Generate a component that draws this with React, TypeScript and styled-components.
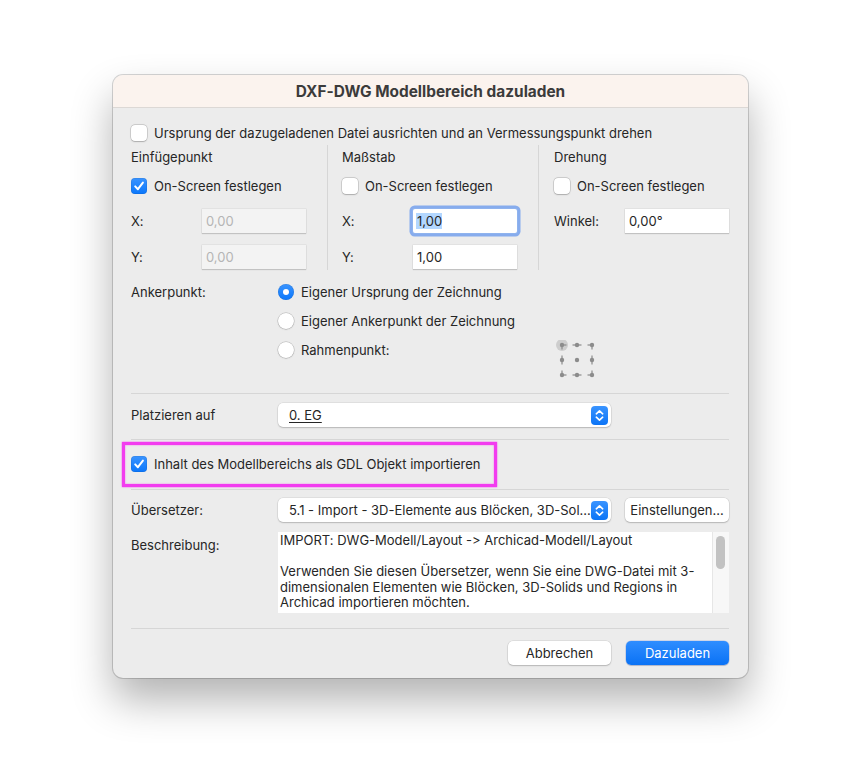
import React from "react";
import styled, { createGlobalStyle } from "styled-components";

const Global = createGlobalStyle`
  html, body { margin: 0; padding: 0; background: #ffffff; }
  body {
    font-family: Inter, "Noto Sans", "Liberation Sans", sans-serif;
    font-size: 13px;
    color: #262626;
    -webkit-font-smoothing: antialiased;
    font-feature-settings: "calt" 0, "liga" 0;
    font-variant-ligatures: none;
  }
  * { box-sizing: border-box; }
`;

const Page = styled.div`
  width: 848px;
  height: 765px;
  padding: 75px 0 0 113px;
`;

const Dialog = styled.div`
  width: 635px;
  border-radius: 10px;
  background: #ececec;
  overflow: hidden;
  box-shadow: 0 0 0 1px rgba(0, 0, 0, 0.16), 0 22px 42px rgba(0, 0, 0, 0.3);
  display: flex;
  flex-direction: column;
`;

const TitleBar = styled.div`
  height: 33px;
  background: #fbf3ee;
  border-bottom: 1px solid #dcd8d5;
  display: flex;
  align-items: center;
  justify-content: center;
  font-weight: 700;
  font-size: 15.4px;
  color: #3b3b3b;
`;

const Body = styled.div`
  padding: 17px 19px 13px 18px;
  display: flex;
  flex-direction: column;
`;

const CheckRow = styled.label<{ $mt?: number }>`
  display: flex;
  align-items: center;
  gap: 7px;
  height: 16px;
  line-height: 16px;
  margin-top: ${(p) => p.$mt ?? 0}px;
  white-space: nowrap;
`;

const Box = styled.span<{ $checked?: boolean }>`
  width: 16px;
  height: 16px;
  flex: none;
  border-radius: 4px;
  display: inline-flex;
  align-items: center;
  justify-content: center;
  background: ${(p) => (p.$checked ? "linear-gradient(#3a94ff, #0b77fb)" : "#ffffff")};
  box-shadow: ${(p) =>
    p.$checked
      ? "inset 0 0 0 0.5px rgba(0,0,0,0.12)"
      : "0 0 0 0.5px rgba(0,0,0,0.22), 0 0.5px 1.5px rgba(0,0,0,0.18)"};
`;

const RadioDot = styled.span<{ $checked?: boolean }>`
  width: 16px;
  height: 16px;
  flex: none;
  border-radius: 50%;
  display: inline-flex;
  align-items: center;
  justify-content: center;
  background: ${(p) => (p.$checked ? "linear-gradient(#3a94ff, #0b77fb)" : "#ffffff")};
  box-shadow: ${(p) =>
    p.$checked
      ? "inset 0 0 0 0.5px rgba(0,0,0,0.12)"
      : "0 0 0 0.5px rgba(0,0,0,0.22), 0 0.5px 1.5px rgba(0,0,0,0.18)"};
  &::after {
    content: "";
    display: ${(p) => (p.$checked ? "block" : "none")};
    width: 6px;
    height: 6px;
    border-radius: 50%;
    background: #fff;
  }
`;

const Check = ({ checked }: { checked?: boolean }) => (
  <Box $checked={checked}>
    {checked && (
      <svg width="16" height="16" viewBox="0 0 16 16">
        <path d="M4.2 8.4 L6.9 11.2 L11.9 4.6" fill="none" stroke="#fff" strokeWidth="2" strokeLinecap="round" strokeLinejoin="round" />
      </svg>
    )}
  </Box>
);

const Columns = styled.div`
  display: flex;
  margin-top: 4px;
`;

const Column = styled.div<{ $w: number; $pl: number; $sep?: boolean }>`
  width: ${(p) => p.$w}px;
  padding: 4px 0 1px ${(p) => p.$pl}px;
  border-left: ${(p) => (p.$sep ? "1px solid #d6d6d6" : "none")};
  display: flex;
  flex-direction: column;
`;

const Heading = styled.div`
  line-height: 16px;
  height: 16px;
`;

const FieldRow = styled.div<{ $mt: number }>`
  display: flex;
  align-items: center;
  margin-top: ${(p) => p.$mt}px;
`;

const FieldLabel = styled.span`
  width: 71px;
  flex: none;
`;

const Input = styled.div<{ $w: number; $disabled?: boolean; $focus?: boolean }>`
  width: ${(p) => p.$w}px;
  height: 24px;
  padding: 0 4px;
  display: flex;
  align-items: center;
  background: ${(p) => (p.$disabled ? "#f3f3f3" : "#ffffff")};
  color: ${(p) => (p.$disabled ? "#b5b5b5" : "#262626")};
  box-shadow: ${(p) =>
    p.$focus
      ? "0 0 0 1px #8fb3ee, 0 0 0 3.5px rgba(52, 120, 238, 0.55)"
      : "0 0 0 0.5px rgba(0,0,0,0.08), 0 1px 1px rgba(0,0,0,0.14)"};
  border-radius: ${(p) => (p.$focus ? "2px" : "0")};
`;

const Selected = styled.span`
  background: #b3d7ff;
  margin-left: -1px;
  padding-left: 1px;
`;

const AnchorGrid = styled.div`
  display: grid;
  grid-template-columns: 147px 278px auto;
  grid-template-rows: 16px 16px 16px;
  row-gap: 13px;
  margin-top: 14px;
  align-items: center;
`;

const RadioRow = styled.div`
  display: flex;
  align-items: center;
  gap: 7px;
  grid-column: 2;
  line-height: 16px;
`;

const AnchorWidget = styled.div`
  grid-column: 3;
  grid-row: 3;
  align-self: start;
  margin-top: -2px;
  width: 42px;
  height: 38px;
`;

const Separator = styled.div<{ $mt: number }>`
  height: 1px;
  background: #d6d6d6;
  margin-top: ${(p) => p.$mt}px;
`;

const FormRow = styled.div<{ $mt: number; $align?: string }>`
  display: flex;
  align-items: ${(p) => p.$align ?? "center"};
  margin-top: ${(p) => p.$mt}px;
`;

const RowLabel = styled.span<{ $pt?: number }>`
  width: 147px;
  flex: none;
  line-height: 16px;
  padding-top: ${(p) => p.$pt ?? 0}px;
`;

const Select = styled.div`
  width: 333px;
  height: 24px;
  border-radius: 5px;
  background: #ffffff;
  box-shadow: 0 0 0 0.5px rgba(0,0,0,0.1), 0 1px 1.5px rgba(0,0,0,0.18);
  display: flex;
  align-items: center;
  padding: 0 3px 0 11px;
  white-space: nowrap;
`;

const SelectText = styled.span<{ $underline?: boolean }>`
  flex: 1;
  overflow: hidden;
  text-decoration: ${(p) => (p.$underline ? "underline" : "none")};
  text-underline-offset: 2px;
`;

const Stepper = styled.span`
  width: 17px;
  height: 19px;
  flex: none;
  border-radius: 4px;
  background: linear-gradient(#3a94ff, #0b74f6);
  display: inline-flex;
  align-items: center;
  justify-content: center;
`;

const Arrows = () => (
  <Stepper>
    <svg width="17" height="19" viewBox="0 0 17 19">
      <path d="M5.3 7.8 L8.5 4.8 L11.7 7.8" fill="none" stroke="#fff" strokeWidth="1.6" strokeLinecap="round" strokeLinejoin="round" />
      <path d="M5.3 11.2 L8.5 14.2 L11.7 11.2" fill="none" stroke="#fff" strokeWidth="1.6" strokeLinecap="round" strokeLinejoin="round" />
    </svg>
  </Stepper>
);

const Highlight = styled.div`
  margin-top: 2px;
  margin-left: -9px;
  width: 375px;
  height: 45px;
  border: 3px solid #f23cef;
  box-shadow: 0 0 1.5px #f23cef, inset 0 0 1.5px #f23cef;
  display: flex;
  align-items: center;
  padding-left: 6px;
  padding-bottom: 2px;
`;

const Button = styled.div<{ $primary?: boolean; $w: number; $ml?: number }>`
  width: ${(p) => p.$w}px;
  height: 24px;
  margin-left: ${(p) => p.$ml ?? 0}px;
  border-radius: 5px;
  display: flex;
  align-items: center;
  justify-content: center;
  white-space: nowrap;
  background: ${(p) => (p.$primary ? "linear-gradient(#2f8dff, #0a72f5)" : "#ffffff")};
  color: ${(p) => (p.$primary ? "#ffffff" : "#262626")};
  box-shadow: ${(p) =>
    p.$primary
      ? "0 0 0 0.5px rgba(0,60,200,0.25), 0 1px 1px rgba(0,0,0,0.15)"
      : "0 0 0 0.5px rgba(0,0,0,0.12), 0 1px 1.5px rgba(0,0,0,0.18)"};
`;

const TextArea = styled.div`
  width: 451px;
  height: 81px;
  background: #ffffff;
  display: flex;
`;

const TextContent = styled.div`
  flex: 1;
  padding: 1px 2px;
  line-height: 15.5px;
  white-space: nowrap;
`;

const ScrollTrack = styled.div`
  width: 17px;
  flex: none;
  background: #f7f7f7;
  border-left: 1px solid #e6e6e6;
  padding: 4px 0 0 3px;
`;

const ScrollThumb = styled.div`
  width: 9px;
  height: 33px;
  border-radius: 5px;
  background: #c2c2c2;
`;

const ButtonBar = styled.div`
  display: flex;
  justify-content: flex-end;
  gap: 15px;
  margin-top: 12px;
`;

const Spacer = styled.div`
  height: 16px;
`;

const Widget = () => {
  const c = "#8c8c8c";
  const xs = [6, 21, 36];
  const ys = [5, 20, 35];
  const arms: Record<string, [number, number][]> = {
    "0-0": [[1, 0], [0, 1]],
    "1-0": [[-1, 0], [1, 0]],
    "2-0": [[-1, 0], [0, 1]],
    "0-1": [[0, -1], [0, 1]],
    "1-1": [],
    "2-1": [[0, -1], [0, 1]],
    "0-2": [[1, 0], [0, -1]],
    "1-2": [[-1, 0], [1, 0]],
    "2-2": [[-1, 0], [0, -1]],
  };
  return (
    <AnchorWidget>
      <svg width="42" height="38" viewBox="0 0 42 38">
        <circle cx={xs[0]} cy={ys[0]} r="6" fill="rgba(0,0,0,0.13)" />
        {xs.map((x, i) =>
          ys.map((y, j) => (
            <g key={`${i}-${j}`}>
              {arms[`${i}-${j}`].map(([dx, dy], k) => (
                <line key={k} x1={x} y1={y} x2={x + dx * 4.5} y2={y + dy * 4.5} stroke={c} strokeWidth="1.2" />
              ))}
              <circle cx={x} cy={y} r="2.2" fill={c} />
            </g>
          ))
        )}
      </svg>
    </AnchorWidget>
  );
};

export default function App() {
  return (
    <Page>
      <Global />
      <Dialog>
        <TitleBar>DXF-DWG Modellbereich dazuladen</TitleBar>
        <Body>
          <CheckRow>
            <Check />
            Ursprung der dazugeladenen Datei ausrichten und an Vermessungspunkt drehen
          </CheckRow>

          <Columns>
            <Column $w={196} $pl={0}>
              <Heading>Einfügepunkt</Heading>
              <CheckRow $mt={13}>
                <Check checked />
                On-Screen festlegen
              </CheckRow>
              <FieldRow $mt={15}>
                <FieldLabel>X:</FieldLabel>
                <Input $w={104} $disabled>0,00</Input>
              </FieldRow>
              <FieldRow $mt={12}>
                <FieldLabel>Y:</FieldLabel>
                <Input $w={104} $disabled>0,00</Input>
              </FieldRow>
            </Column>
            <Column $w={211} $pl={14} $sep>
              <Heading>Maßstab</Heading>
              <CheckRow $mt={13}>
                <Check />
                On-Screen festlegen
              </CheckRow>
              <FieldRow $mt={15}>
                <FieldLabel>X:</FieldLabel>
                <Input $w={104} $focus>
                  <Selected>1,00</Selected>
                </Input>
              </FieldRow>
              <FieldRow $mt={12}>
                <FieldLabel>Y:</FieldLabel>
                <Input $w={104}>1,00</Input>
              </FieldRow>
            </Column>
            <Column $w={191} $pl={15} $sep>
              <Heading>Drehung</Heading>
              <CheckRow $mt={13}>
                <Check />
                On-Screen festlegen
              </CheckRow>
              <FieldRow $mt={15}>
                <FieldLabel>Winkel:</FieldLabel>
                <Input $w={104}>0,00°</Input>
              </FieldRow>
              <FieldRow $mt={12}>
                <Spacer />
              </FieldRow>
            </Column>
          </Columns>

          <AnchorGrid>
            <span>Ankerpunkt:</span>
            <RadioRow>
              <RadioDot $checked />
              Eigener Ursprung der Zeichnung
            </RadioRow>
            <RadioRow>
              <RadioDot />
              Eigener Ankerpunkt der Zeichnung
            </RadioRow>
            <RadioRow>
              <RadioDot />
              Rahmenpunkt:
            </RadioRow>
            <Widget />
          </AnchorGrid>

          <Separator $mt={35} />

          <FormRow $mt={9}>
            <RowLabel>Platzieren auf</RowLabel>
            <Select>
              <SelectText $underline>0. EG</SelectText>
              <Arrows />
            </Select>
          </FormRow>

          <Separator $mt={12} />

          <Highlight>
            <CheckRow>
              <Check checked />
              Inhalt des Modellbereichs als GDL Objekt importieren
            </CheckRow>
          </Highlight>

          <Separator $mt={2} />

          <FormRow $mt={8}>
            <RowLabel>Übersetzer:</RowLabel>
            <Select>
              <SelectText>5.1 - Import - 3D-Elemente aus Blöcken, 3D-Sol...</SelectText>
              <Arrows />
            </Select>
            <Button $w={104} $ml={14}>Einstellungen...</Button>
          </FormRow>

          <FormRow $mt={10} $align="flex-start">
            <RowLabel $pt={5}>Beschreibung:</RowLabel>
            <TextArea>
              <TextContent>
                IMPORT: DWG-Modell/Layout -&gt; Archicad-Modell/Layout
                <br />
                <br />
                Verwenden Sie diesen Übersetzer, wenn Sie eine DWG-Datei mit 3-
                <br />
                dimensionalen Elementen wie Blöcken, 3D-Solids und Regions in
                <br />
                Archicad importieren möchten.
              </TextContent>
              <ScrollTrack>
                <ScrollThumb />
              </ScrollTrack>
            </TextArea>
          </FormRow>

          <Separator $mt={15} />

          <ButtonBar>
            <Button $w={103}>Abbrechen</Button>
            <Button $w={103} $primary>Dazuladen</Button>
          </ButtonBar>
        </Body>
      </Dialog>
    </Page>
  );
}
